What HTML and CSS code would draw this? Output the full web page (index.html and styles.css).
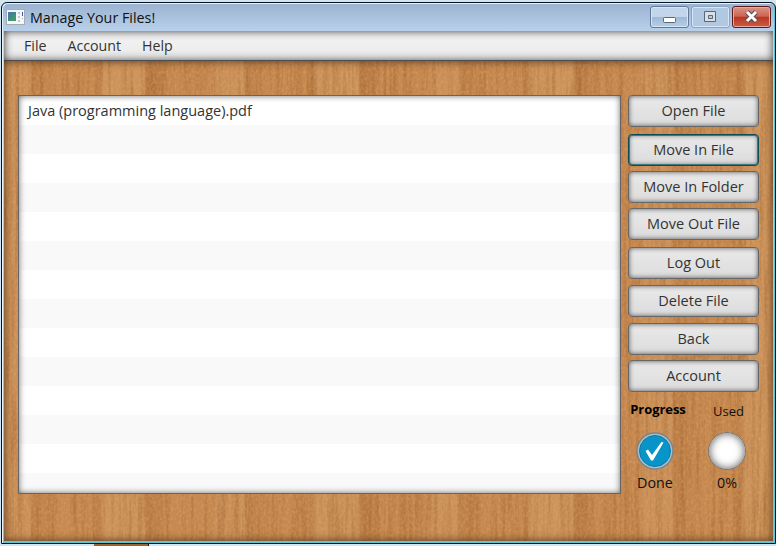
FILE: index.html
```html
<!DOCTYPE html>
<html lang="en">
<head>
<meta charset="utf-8">
<title>Manage Your Files!</title>
<link rel="stylesheet" href="styles.css">
</head>
<body>
<svg class="defs" width="0" height="0" aria-hidden="true">
  <filter id="grain" x="0" y="0" width="100%" height="100%" color-interpolation-filters="sRGB">
    <feTurbulence type="fractalNoise" baseFrequency="0.25 0.012" numOctaves="3" seed="4"/>
    <feColorMatrix values="0 0 0 0 0.55  0 0 0 0 0.31  0 0 0 0 0.11  0.8 0 0 0 -0.33"/>
  </filter>
  <filter id="fleck" x="0" y="0" width="100%" height="100%" color-interpolation-filters="sRGB">
    <feTurbulence type="fractalNoise" baseFrequency="0.4 0.3" numOctaves="2" seed="9"/>
    <feColorMatrix values="0 0 0 0 0.9  0 0 0 0 0.67  0 0 0 0 0.42  0.9 0 0 0 -0.36"/>
  </filter>
</svg>
<div class="window">
  <header class="titlebar">
    <svg class="app-icon" width="19" height="16" viewBox="0 0 19 16">
      <rect x=".5" y=".5" width="18" height="15" fill="#f4f6f8" stroke="#a3adb8"/>
      <rect x="2" y="3" width="8" height="9" fill="#3f8b83"/>
      <path d="M2 3h5L2 9z" fill="#4b78ab"/><path d="M2 12l8-7v7z" fill="#48966c"/>
      <path d="M12 3h2v2h-2zM12 7h2v2h-2zM12 11h2v2h-2z" fill="#c4c9cd"/>
      <path d="M16 3h1v4h-1z" fill="#3f5da0"/><path d="M16 9h1v1h-1z" fill="#aaa"/>
    </svg>
    <h1>Manage Your Files!</h1>
    <div class="controls">
      <span class="ctl"><svg width="38" height="21"><rect x="13.5" y="11.5" width="12" height="5" rx="1" fill="#fff" stroke="#596779"/></svg></span>
      <span class="ctl dim"><svg width="38" height="21"><path d="M13.5 5.5h11v10h-11z" fill="#d9dfe7" stroke="#5c6673"/><path d="M17.5 9.5h4v3h-4z" fill="#b7cbe1" stroke="#5c6673"/></svg></span>
      <span class="ctl close"><svg width="38" height="21"><path d="M15 6l9 9M24 6l-9 9" stroke="#5b4850" stroke-width="5"/><path d="M15 6l9 9M24 6l-9 9" stroke="#fff" stroke-width="3"/></svg></span>
    </div>
  </header>
  <div class="client">
    <nav class="menu"><span>File</span><span>Account</span><span>Help</span></nav>
    <main class="wood">
      <svg class="texture" width="769" height="481"><rect width="769" height="481" filter="url(#grain)"/><rect width="769" height="481" filter="url(#fleck)"/></svg>
      <div class="content">
        <ul class="files"><li><span class="filename">Java (programming language).pdf</span></li></ul>
        <aside>
          <div class="actions">
            <button>Open File</button>
            <button class="focused">Move In File</button>
            <button>Move In Folder</button>
            <button>Move Out File</button>
            <button>Log Out</button>
            <button>Delete File</button>
            <button>Back</button>
            <button>Account</button>
          </div>
          <div class="status">
            <section class="progress">
              <h2>Progress</h2>
              <svg width="38" height="38"><circle cx="19" cy="19" r="18" fill="#a9c0cc" stroke="#7c858a" stroke-width="1.5"/><circle cx="19" cy="19" r="15.5" fill="#0794c8" stroke="#137aa5"/><path d="M9.5 19l2.5-1.5 4 5.5L25.5 10l2 .5L17 28.5h-2z" fill="#fff"/></svg>
              <p>Done</p>
            </section>
            <section class="used">
              <h2>Used</h2>
              <div class="dial"></div>
              <p>0%</p>
            </section>
          </div>
        </aside>
      </div>
    </main>
  </div>
</div>
<div class="behind"></div>
</body>
</html>
```
FILE: styles.css
```css
* { box-sizing: border-box; }
body {
  margin: 0; width: 776px; height: 546px; overflow: hidden;
  padding: 2px 0 0 1px;
  background: #d3e4f3;
  font: 14.5px/20px "Open Sans", "Noto Sans", sans-serif; color: #333;
}
.defs { position: absolute; }
.window {
  width: 775px; height: 542px;
  border: 1px solid #06141d; border-radius: 6px 6px 0 0;
  background: linear-gradient(#9bb3d0, #b9d1ea 29px, #a9dbea 60px, #76bfd0);
  box-shadow: inset 1px 1px #e5f4fb, inset -1px -1px #5bc2d4;
  padding: 1px 2px 2px;
}
.titlebar { height: 27px; display: flex; align-items: flex-start; padding: 1px 0 0 2px; color: #111; }
.app-icon { margin-top: 4px; }
h1 { margin: 3px 0 0 5px; font-size: 14.3px; font-weight: 400; line-height: 20px; }
.controls { margin-left: auto; display: flex; gap: 2px; padding: 1px 2px 0 0; }
.ctl {
  width: 39px; height: 22px; border: 1px solid #60799a; border-radius: 3px;
  box-shadow: inset 0 0 0 1px #d7e5f4;
  background: linear-gradient(#c3d5e9 48%, #9fb9d6 52%, #b6cee8);
}
.ctl svg { display: block; margin: -1px; }
.ctl.dim { border-color: #8ba4c1; background: #b0c8e2; }
.ctl.close { border-color: #5b1c20; box-shadow: inset 0 0 0 1px #e5a99e; background: linear-gradient(#dc9384, #cb6652 46%, #b93722 52%, #cc5c42); }
.client { height: 510px; }
.menu {
  height: 30px; display: flex; gap: 21px; padding: 5px 20px;
  font-size: 14.2px; line-height: 20px;
  background: linear-gradient(#f5f5f5, #e8e8e8);
  box-shadow: inset 0 0 8px #333, inset 0 -1px #666;
}
.wood {
  position: relative; height: 480px;
  background: repeating-linear-gradient(90deg, #ca9059 0 26px, #bd8049 28px 31px, #c68950 60px, #c4874e 90px, #bc7f48 92px 94px, #cb925b 100px, #cc935c 140px, #b97b45 143px 146px, #c58850 165px, #c4874f 205px, #ca9059 214px);
}
.wood::after { content: ""; position: absolute; inset: 0; box-shadow: inset 0 0 8px #4b301b; pointer-events: none; }
.texture { position: absolute; left: 0; top: 0; width: 100%; height: 100%; }
.content { position: relative; display: flex; gap: 7px; padding: 34px 13px 0 14px; }
.files {
  width: 603px; height: 399px; margin: 0; padding: 1px 0 0; list-style: none;
  background: repeating-linear-gradient(#fff 0 29px, #f9f9f9 29px 58px) 0 1px;
  box-shadow: inset 0 0 0 1px #656565, inset 0 0 7px #444;
}
.files li { height: 29px; padding: 5px 10px; }
aside { width: 131px; }
.actions { display: grid; grid-template-rows: 39px 37px 37px 39px 38px 38px 37px 32px; height: 297px; }
button {
  width: 131px; height: 32px; padding: 0; border: 1px solid #666; border-radius: 4px;
  font: inherit; font-size: 14.5px; color: #333;
  background: linear-gradient(#e9e9e9, #dcdcdc);
  box-shadow: inset 0 0 5px #555;
}
button.focused { border-color: #0c4b59; box-shadow: inset 0 0 0 1px #3b7884, inset 0 0 5px #555; }
.status { display: flex; color: #111; font-size: 14.3px; }
.status section { display: flex; flex-direction: column; align-items: center; }
.progress { width: 60px; margin-left: -3px; }
.used { width: 60px; margin-left: 12px; }
h2 { margin: 7px 0 13px; font-size: 13px; line-height: 20px; }
.progress h2 { padding-left: 6px; letter-spacing: -.05px; color: #000; }
.used h2 { margin: 9px 0 11px; padding-left: 3px; font-weight: 400; }
.status p { margin: 3px 0 0; line-height: 20px; }
.dial { width: 38px; height: 38px; border-radius: 50%; background: #fff; border: 1px solid #777; box-shadow: inset 0 0 8px #555; }
.behind { width: 55px; height: 2px; margin-left: 93px; background: #9d622f; border-right: 1px solid #111; }
```
